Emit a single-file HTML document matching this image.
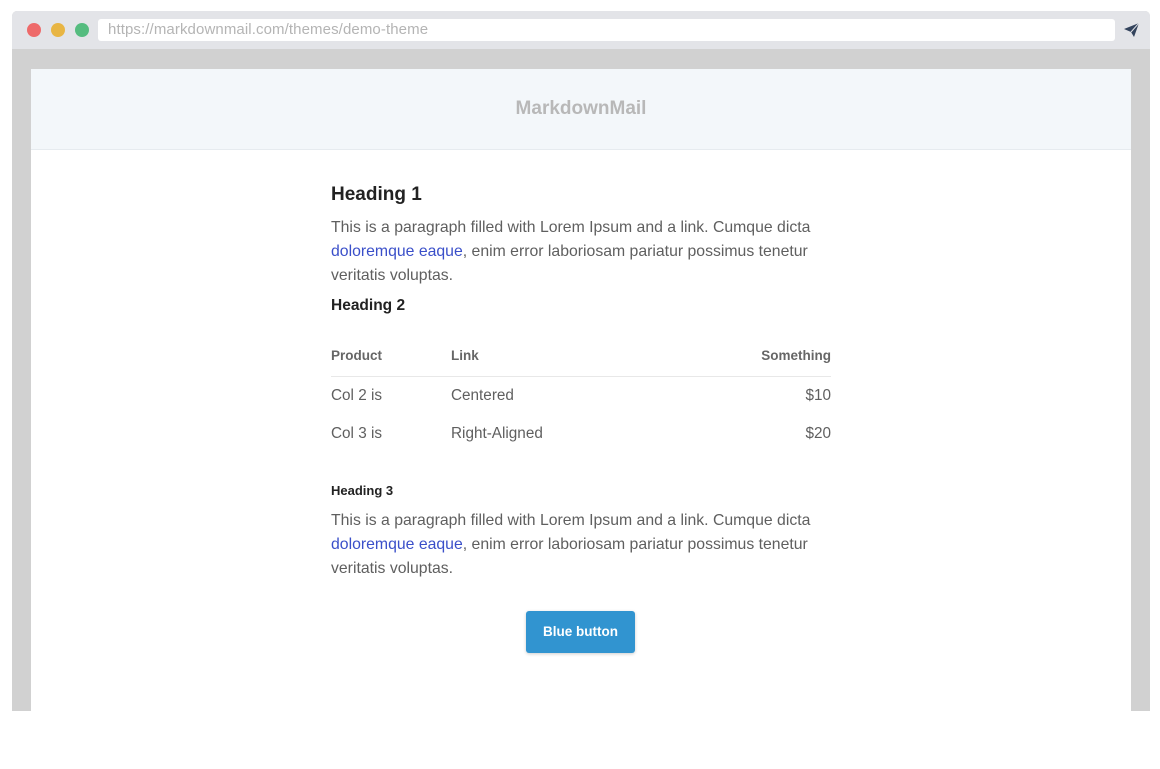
<!DOCTYPE html>
<html><head><style>
*{margin:0;padding:0;box-sizing:border-box}
body{width:1160px;height:666px;background:#fff;font-family:"Liberation Sans",sans-serif;position:relative;overflow:hidden}
.frame{position:absolute;left:12px;top:11px;width:1138px;height:700px;background:#d1d1d1;border-radius:5px 5px 0 0}
.bar{position:absolute;left:0;top:0;width:1138px;height:38px;background:#e3e4e8;border-radius:5px 5px 0 0}
.dot{position:absolute;top:12px;width:14px;height:14px;border-radius:50%}
.url{position:absolute;left:86px;top:8px;width:1017px;height:22px;background:#fff;border-radius:3px;font-size:15px;color:#b4b4b4;line-height:22px;padding-left:10px;letter-spacing:.1px}
.page{position:absolute;left:31px;top:69px;width:1100px;height:700px;background:#fff}
.hdr{height:81px;background:#f3f7fa;border-bottom:1px solid #e6ebef;text-align:center;line-height:80px;font-weight:bold;font-size:19px;color:#b8b8b8}
.col{position:absolute;left:300px;top:114px;width:500px;color:#5f5f5f}
h1{font-size:19px;color:#222;position:absolute;top:0;}
.p{font-size:15.8px;line-height:24px;position:absolute;left:0;width:540px}
a{color:#3a4fc9;text-decoration:none}
.t{position:absolute;left:0;width:500px;font-size:15.3px}
.t div{position:absolute}
</style></head><body>
<div class="frame">
<div class="bar">
<div class="dot" style="left:15px;background:#ee6a6a"></div>
<div class="dot" style="left:39px;background:#e8b543"></div>
<div class="dot" style="left:63px;background:#55bc7f"></div>
<div class="url">https://markdownmail.com/themes/demo-theme</div>
<svg style="position:absolute;left:1112px;top:12px" width="15" height="14" viewBox="0 0 15 14"><path d="M0 6 L15 0 L10 14 L7 9 Z" fill="#33435c"/><path d="M7 9 L15 0" stroke="#e3e4e8" stroke-width="1"/></svg>
</div>
</div>
<div class="page">
<div class="hdr">MarkdownMail</div>
<div class="col">
<h1 style="top:1px">Heading 1</h1>
<div class="p" style="top:33px">This is a paragraph filled with Lorem Ipsum and a link. Cumque dicta<br><a>doloremque eaque</a>, enim error laboriosam pariatur possimus tenetur<br>veritatis voluptas.</div>
<div style="position:absolute;top:114px;font-weight:bold;font-size:15.5px;color:#222">Heading 2</div>
<div class="t" style="top:165px;font-weight:bold;font-size:13.5px;color:#666"><div style="left:0">Product</div><div style="left:120px">Link</div><div style="right:0">Something</div></div>
<div style="position:absolute;top:193px;left:0;width:500px;border-top:1px solid #e8e8e8"></div>
<div class="t" style="top:204px"><div style="left:0">Col 2 is</div><div style="left:120px">Centered</div><div style="right:0">$10</div></div>
<div class="t" style="top:242px"><div style="left:0">Col 3 is</div><div style="left:120px">Right-Aligned</div><div style="right:0">$20</div></div>
<div style="position:absolute;top:300px;font-weight:bold;font-size:13px;color:#222">Heading 3</div>
<div class="p" style="top:326px">This is a paragraph filled with Lorem Ipsum and a link. Cumque dicta<br><a>doloremque eaque</a>, enim error laboriosam pariatur possimus tenetur<br>veritatis voluptas.</div>
<div style="position:absolute;left:195px;top:428px;width:109px;height:42px;background:#3194d0;border-radius:3px;color:#fff;font-size:13.5px;font-weight:bold;text-align:center;line-height:42px;box-shadow:0 1px 3px rgba(0,0,0,.2)">Blue button</div>
</div>
</div>
</body></html>
